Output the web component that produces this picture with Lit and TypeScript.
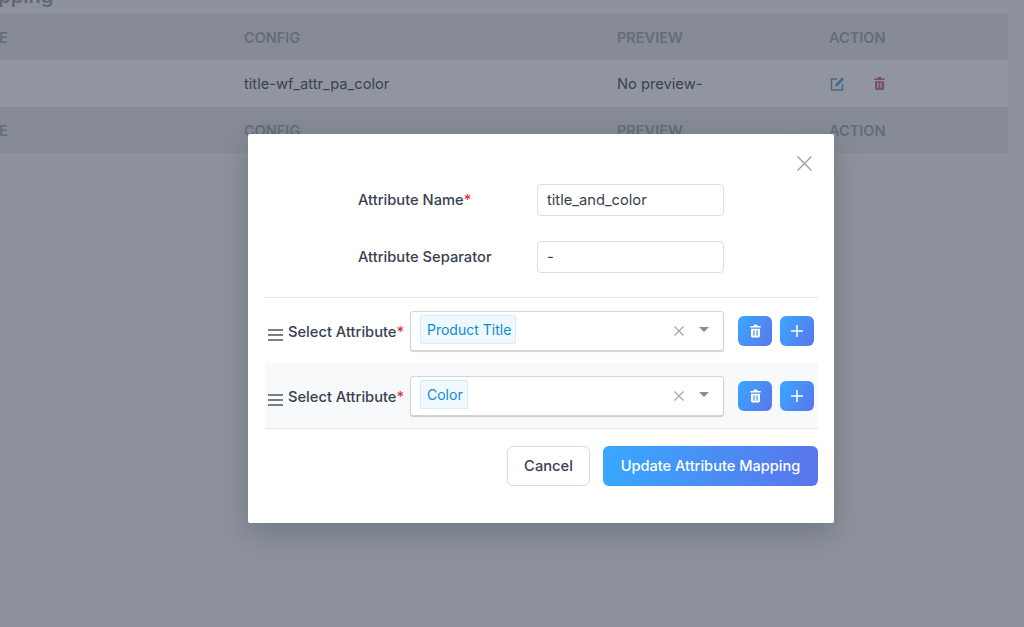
import { LitElement, html, css, svg } from "lit";
import { customElement } from "lit/decorators.js";

const trashPath = svg`<path d="M5 2.2V1.4C5 .9 5.4.5 5.9.5h2.2c.5 0 .9.4.9.9v.8h3.2c.3 0 .6.3.6.6v.5c0 .2-.2.4-.4.4H1.6c-.2 0-.4-.2-.4-.4v-.5c0-.3.3-.6.6-.6H5zM2.2 5h9.6v8c0 .8-.7 1.5-1.5 1.5H3.700C2.900 14.500 2.200 13.800 2.200 13V5zm2.500 1.700v6h1.300v-6H4.700zm3.300 0v6h1.300v-6H8z"/>`;

@customElement("app-root")
export class AppRoot extends LitElement {
  static styles = css`
    :host {
      display: block;
      position: relative;
      width: 1024px;
      height: 627px;
      overflow: hidden;
      background: #f3f4f6;
      font-family: Inter, "Noto Sans", sans-serif;
      color: #374151;
    }

    /* page behind the dialog */
    .page {
      margin-left: -60px;
      width: 1068px;
    }

    .page-title {
      height: 14px;
      padding-left: 24px;
      font-size: 20px;
      font-weight: 600;
      line-height: 14px;
      color: #9aa1ad;
      overflow: hidden;
    }

    .page-title span {
      display: block;
      margin-top: -11px;
      margin-left: -85px;
    }

    .row {
      display: grid;
      grid-template-columns: 280px 373px 212px 1fr;
      align-items: center;
      padding-left: 24px;
      box-sizing: border-box;
    }

    .head {
      height: 46px;
      background: #e4e7eb;
      color: #a3a9b4;
      font-size: 14.500px;
      font-weight: 600;
    }

    .body {
      height: 47px;
      background: #fafbfd;
      color: #4b5563;
      font-size: 14.700px;
    }

    .actions {
      display: flex;
      align-items: center;
      gap: 28px;
    }

    .actions svg {
      display: block;
    }

    /* dialog */
    .overlay {
      position: absolute;
      inset: 0;
      display: flex;
      align-items: center;
      justify-content: center;
      padding: 30px 0 0 58px;
      background: rgba(40, 47, 65, 0.5);
    }

    .modal {
      position: relative;
      width: 586px;
      height: 389px;
      box-sizing: border-box;
      padding: 50px 16px 0 17px;
      background: #fff;
      border-radius: 2px;
      box-shadow: 0 10px 30px rgba(40, 47, 65, 0.28);
      font-size: 14.700px;
      font-weight: 500;
    }

    .close {
      position: absolute;
      top: 22px;
      right: 22px;
      display: block;
    }

    .field {
      display: grid;
      grid-template-columns: 179px 187px;
      align-items: center;
      padding-left: 93px;
      margin-bottom: 25px;
    }

    .field.last {
      margin-bottom: 24px;
    }

    .input {
      height: 32px;
      box-sizing: border-box;
      padding: 0 9px;
      display: flex;
      align-items: center;
      border: 1px solid #dcdfe6;
      border-radius: 4px;
      font-weight: 400;
      color: #374151;
    }

    .req {
      color: #ef2b3c;
    }

    .attrs {
      border-top: 1px solid #e5e7eb;
      border-bottom: 1px solid #e5e7eb;
    }

    .attr {
      height: 65px;
      display: flex;
      align-items: center;
      padding-left: 3px;
    }

    .attr.alt {
      background: #f8f9fb;
    }

    .handle {
      display: block;
      margin: 8px 5px 0 0;
    }

    .attr-label {
      width: 122px;
      padding-top: 2px;
      white-space: nowrap;
    }

    .select {
      width: 314px;
      height: 40px;
      box-sizing: border-box;
      display: flex;
      align-items: center;
      padding: 0 14px 0 9px;
      background: #fff;
      border: 1px solid #d4d4d4;
      border-radius: 3px;
      box-shadow: 0 1px 1px rgba(0, 0, 0, 0.18);
    }

    .chip {
      height: 29px;
      box-sizing: border-box;
      display: flex;
      align-items: center;
      padding: 0 4px 0 6px;
      margin-top: -2px;
      background: #eff8fd;
      border: 1px solid #d5edfa;
      border-radius: 2px;
      color: #0f8bd0;
      font-size: 14px;
      font-weight: 400;
    }

    .clear {
      display: block;
      margin-left: auto;
    }

    .caret {
      width: 0;
      height: 0;
      margin-left: 15px;
      border-left: 5.500px solid transparent;
      border-right: 5.500px solid transparent;
      border-top: 5.500px solid #8c8c8c;
      margin-top: -2px;
    }

    .icon-btn {
      width: 34px;
      height: 30px;
      display: flex;
      align-items: center;
      justify-content: center;
      border-radius: 6px;
      background: linear-gradient(120deg, #38a9ff, #5b74ec);
    }

    .icon-btn.first {
      margin-left: 14px;
      margin-right: 8px;
    }

    .footer {
      display: flex;
      justify-content: flex-end;
      gap: 13px;
      margin-top: 17px;
    }

    .btn {
      height: 40px;
      box-sizing: border-box;
      display: flex;
      align-items: center;
      justify-content: center;
      border-radius: 6px;
    }

    .cancel {
      width: 83px;
      border: 1px solid #d8dbe2;
      color: #374151;
    }

    .primary {
      width: 215px;
      color: #fff;
      font-size: 14.600px;
      background: linear-gradient(100deg, #38a9ff, #5b74ec);
    }
  `;

  private header() {
    return html`
      <div class="row head">
        <div>NAME</div>
        <div>CONFIG</div>
        <div>PREVIEW</div>
        <div>ACTION</div>
      </div>
    `;
  }

  private attribute(value: string, alt: boolean) {
    return html`
      <div class="attr ${alt ? "alt" : ""}">
        <svg class="handle" width="15" height="12" viewBox="0 0 15 12" fill="none" stroke="#4b5563" stroke-width="1.600">
          <path d="M0 1h15M0 6h15M0 11h15" />
        </svg>
        <div class="attr-label">Select Attribute<span class="req">*</span></div>
        <div class="select">
          <div class="chip">${value}</div>
          <svg class="clear" width="10" height="10" viewBox="0 0 10 10" fill="none" stroke="#a6a6a6" stroke-width="1.200">
            <path d="M.5.5l9 9M9.500.5l-9 9" />
          </svg>
          <div class="caret"></div>
        </div>
        <div class="icon-btn first">
          <svg width="13" height="14" viewBox="0 0 14 15" fill="#fff">${trashPath}</svg>
        </div>
        <div class="icon-btn">
          <svg width="14" height="14" viewBox="0 0 14 14" fill="none" stroke="#fff" stroke-width="1.500">
            <path d="M7 1v12M1 7h12" />
          </svg>
        </div>
      </div>
    `;
  }

  render() {
    return html`
      <div class="page">
        <div class="page-title"><span>Attribute Mapping</span></div>
        ${this.header()}
        <div class="row body">
          <div></div>
          <div>title-wf_attr_pa_color</div>
          <div>No preview-</div>
          <div class="actions">
            <svg width="16" height="16" viewBox="0 0 16 16" fill="none" stroke="#6a9fd0" stroke-width="1.500">
              <path d="M8 3H2.500v11h11V8" />
              <path d="M6 10.500l.6-2.600L13 1.500l2 2-6.400 6.400z" fill="#6a9fd0" stroke="none" />
            </svg>
            <svg width="13" height="15" viewBox="0 0 14 15" fill="#c8707e">${trashPath}</svg>
          </div>
        </div>
        ${this.header()}
      </div>
      <div class="overlay">
        <div class="modal">
          <svg class="close" width="15" height="15" viewBox="0 0 15 15" fill="none" stroke="#9aa1ad" stroke-width="1.400">
            <path d="M.5.5l14 14M14.500.5l-14 14" />
          </svg>
          <div class="field">
            <div>Attribute Name<span class="req">*</span></div>
            <div class="input">title_and_color</div>
          </div>
          <div class="field last">
            <div>Attribute Separator</div>
            <div class="input">-</div>
          </div>
          <div class="attrs">
            ${this.attribute("Product Title", false)}
            ${this.attribute("Color", true)}
          </div>
          <div class="footer">
            <div class="btn cancel">Cancel</div>
            <div class="btn primary">Update Attribute Mapping</div>
          </div>
        </div>
      </div>
    `;
  }
}
